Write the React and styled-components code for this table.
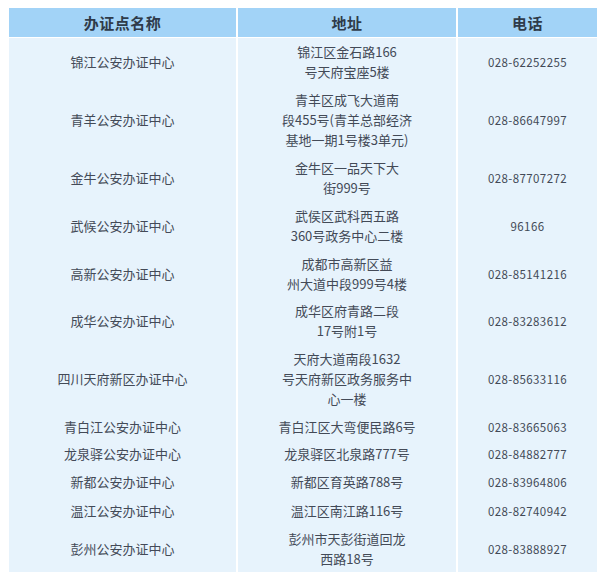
import React from "react";
import styled, { createGlobalStyle } from "styled-components";

const Global = createGlobalStyle`
  html, body { margin: 0; padding: 0; background: #ffffff; }
  body { font-family: "Noto Sans CJK SC", "Noto Sans", sans-serif; }
`;

const Page = styled.div`
  padding: 8px 10px 0 9px;
  height: 572px;
  overflow: hidden;
  box-sizing: border-box;
`;

const Table = styled.div`
  display: grid;
  grid-template-columns: 227px 218px 139px;
  column-gap: 2px;
  width: 588px;
`;

const HeadCell = styled.div`
  background: #a2d3f7;
  height: 29px;
  margin-bottom: 1px;
  display: flex;
  align-items: center;
  justify-content: center;
  font-size: 15px;
  font-weight: 700;
  color: #2f3b4a;
  letter-spacing: 0.5px;
`;

const Cell = styled.div`
  background: #e7f3fc;
  height: ${(p) => p.$h}px;
  display: flex;
  flex-direction: column;
  align-items: center;
  justify-content: center;
  font-size: ${(p) => (p.$num ? "11.5px" : "13px")};
  line-height: 20px;
  color: #434a57;
  text-align: center;
  letter-spacing: ${(p) => (p.$num ? "0.4px" : "0")};
`;

const rows = [
  ["锦江公安办证中心", ["锦江区金石路166", "号天府宝座5楼"], "028-62252255", 48],
  ["青羊公安办证中心", ["青羊区成飞大道南", "段455号(青羊总部经济", "基地一期1号楼3单元)"], "028-86647997", 68],
  ["金牛公安办证中心", ["金牛区一品天下大", "街999号"], "028-87707272", 48],
  ["武候公安办证中心", ["武侯区武科西五路", "360号政务中心二楼"], "96166", 48],
  ["高新公安办证中心", ["成都市高新区益", "州大道中段999号4楼"], "028-85141216", 47],
  ["成华公安办证中心", ["成华区府青路二段", "17号附1号"], "028-83283612", 48],
  ["四川天府新区办证中心", ["天府大道南段1632", "号天府新区政务服务中", "心一楼"], "028-85633116", 68],
  ["青白江公安办证中心", ["青白江区大弯便民路6号"], "028-83665063", 27],
  ["龙泉驿公安办证中心", ["龙泉驿区北泉路777号"], "028-84882777", 27],
  ["新都公安办证中心", ["新都区育英路788号"], "028-83964806", 29],
  ["温江公安办证中心", ["温江区南江路116号"], "028-82740942", 29],
  ["彭州公安办证中心", ["彭州市天彭街道回龙", "西路18号"], "028-83888927", 48],
];

export default function App() {
  return (
    <>
      <Global />
      <Page>
        <Table>
          <HeadCell>办证点名称</HeadCell>
          <HeadCell>地址</HeadCell>
          <HeadCell>电话</HeadCell>
          {rows.map(([name, addr, tel, h]) => (
            <React.Fragment key={name}>
              <Cell $h={h}>{name}</Cell>
              <Cell $h={h}>
                {addr.map((l) => (
                  <span key={l}>{l}</span>
                ))}
              </Cell>
              <Cell $h={h} $num>{tel}</Cell>
            </React.Fragment>
          ))}
        </Table>
      </Page>
    </>
  );
}
